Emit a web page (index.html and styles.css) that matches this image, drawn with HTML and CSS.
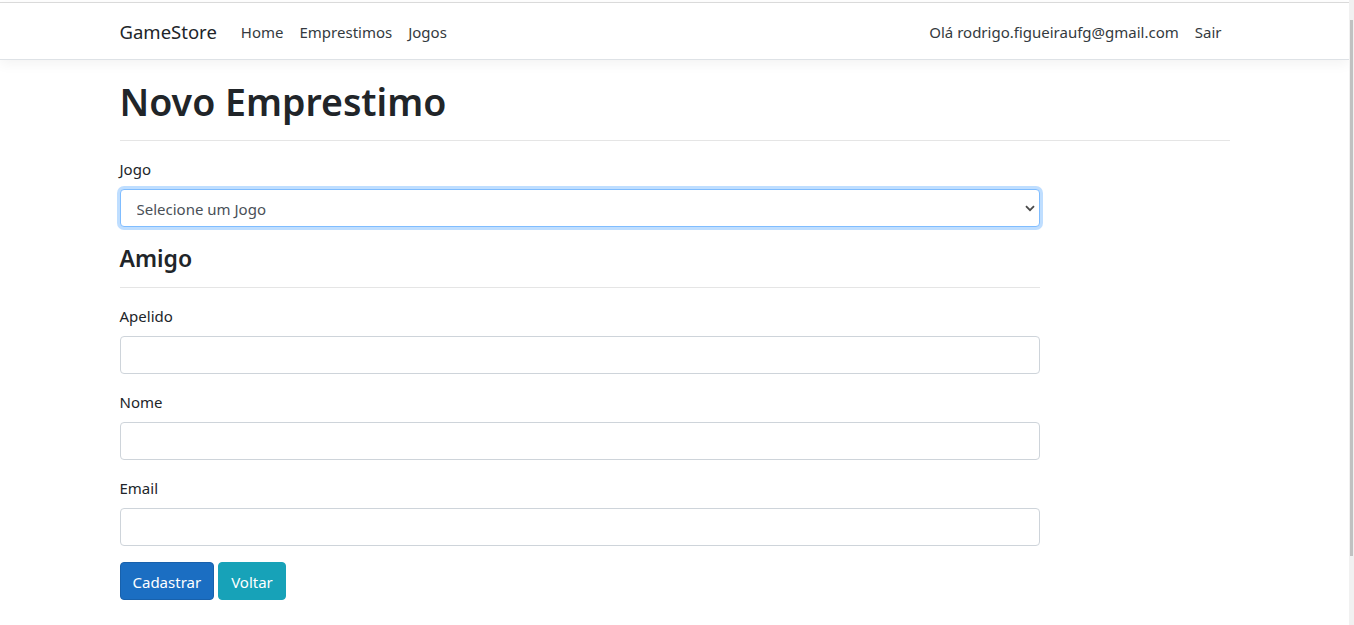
FILE: index.html
```html
<!DOCTYPE html>
<html lang="pt-br">
<head>
<meta charset="utf-8">
<title>Novo Emprestimo - GameStore</title>
<link rel="stylesheet" href="styles.css">
</head>
<body>
<div class="page">
  <header class="navbar">
    <div class="container nav-inner">
      <div class="nav-left">
        <a class="brand" href="#">GameStore</a>
        <nav class="nav-links">
          <a class="nav-link" href="#">Home</a>
          <a class="nav-link" href="#">Emprestimos</a>
          <a class="nav-link" href="#">Jogos</a>
        </nav>
      </div>
      <div class="nav-right">
        <a class="nav-link" href="#">Olá rodrigo.figueiraufg@gmail.com</a>
        <a class="nav-link" href="#">Sair</a>
      </div>
    </div>
  </header>
  <main class="container main">
    <h1 class="title">Novo Emprestimo</h1>
    <hr class="rule">
    <form class="form">
      <div class="form-group">
        <label class="label" for="jogo">Jogo</label>
        <div class="select-wrap">
          <select id="jogo" class="control select">
            <option>Selecione um Jogo</option>
          </select>
          <svg class="chevron" width="10" height="7" viewBox="0 0 10 7"><path d="M1 1.2L5 5.2L9 1.2" fill="none" stroke="#4a4a4a" stroke-width="1.8"/></svg>
        </div>
      </div>
      <h4 class="subtitle">Amigo</h4>
      <hr class="rule">
      <div class="form-group">
        <label class="label" for="apelido">Apelido</label>
        <input id="apelido" class="control" type="text">
      </div>
      <div class="form-group">
        <label class="label" for="nome">Nome</label>
        <input id="nome" class="control" type="text">
      </div>
      <div class="form-group">
        <label class="label" for="email">Email</label>
        <input id="email" class="control" type="text">
      </div>
      <div class="actions">
        <button type="button" class="btn btn-primary">Cadastrar</button>
        <a class="btn btn-info" href="#">Voltar</a>
      </div>
    </form>
  </main>
</div>
<div class="scrollbar"><div class="thumb"></div></div>
</body>
</html>
```
FILE: styles.css
```css
* { box-sizing: border-box; }
html, body { height: 100%; }
body {
  margin: 0;
  display: flex;
  font-family: "Noto Sans", "Open Sans", sans-serif;
  font-size: 15px;
  line-height: 24px;
  color: #212529;
  background: #fff;
  overflow: hidden;
}
.page {
  flex: 1;
  padding-top: 2px;
  min-width: 0;
}
.scrollbar {
  width: 5px;
  background: #f1f1f1;
  padding-top: 20px;
  height: 625px;
}
.thumb {
  height: 536px;
  margin: 0 1px;
  background: #c1c1c1;
}
.container {
  width: 1140px;
  margin: 0 auto;
  padding: 0 15px;
}
a { text-decoration: none; color: inherit; }

.navbar {
  border-top: 1px solid #dadada;
  border-bottom: 1px solid #dee2e6;
  box-shadow: 0 4px 12px rgba(0, 0, 0, 0.05);
  padding: 8px 0;
  background: #fff;
  margin-bottom: 16px;
}
.nav-inner {
  display: flex;
  align-items: center;
  justify-content: space-between;
  height: 40px;
}
.nav-left, .nav-right {
  display: flex;
  align-items: center;
}
.brand {
  font-size: 18.5px;
  line-height: 30px;
  color: #212529;
  margin-right: 16px;
  padding-top: 1px;
}
.nav-links { display: flex; }
.nav-link {
  padding: 9px 8px 7px;
  color: #343a40;
}

.main { padding-bottom: 16px; }
.title {
  font-size: 37.5px;
  font-weight: 600;
  line-height: 48px;
  margin: 0 0 8px;
  padding-top: 2px;
}
.rule {
  border: 0;
  border-top: 1px solid rgba(0, 0, 0, 0.1);
  margin: 16px 0;
}
.title + .rule { margin-top: 14px; }
.form { width: 920px; }
.form .rule { margin-top: 15px; }
.form-group { margin-bottom: 16px; }
.label {
  display: block;
  margin-bottom: 8px;
  height: 24px;
}
.control {
  display: block;
  width: 100%;
  height: 38px;
  padding: 7px 12px 5px;
  font: inherit;
  color: #495057;
  background: #fff;
  border: 1px solid #ced4da;
  border-radius: 4px;
  outline: none;
}
.select-wrap { position: relative; }
.select {
  appearance: none;
  -webkit-appearance: none;
  padding-left: 16px;
  border-color: #80bdff;
  box-shadow: 0 0 0 3px rgba(0, 123, 255, 0.25);
}
.chevron {
  position: absolute;
  right: 5px;
  top: 16px;
}
.subtitle {
  font-size: 23px;
  font-weight: 600;
  line-height: 28px;
  margin: 0;
  padding-top: 1px;
  height: 29px;
}
.actions { display: flex; gap: 4px; }
.btn {
  display: inline-block;
  font: inherit;
  line-height: 24px;
  padding: 7px 12px 5px;
  border: 1px solid transparent;
  border-radius: 4px;
  color: #fff;
  cursor: pointer;
}
.btn-primary { background: #1b6ec2; border-color: #1861ac; }
.btn-info { background: #17a2b8; border-color: #17a2b8; }
```
